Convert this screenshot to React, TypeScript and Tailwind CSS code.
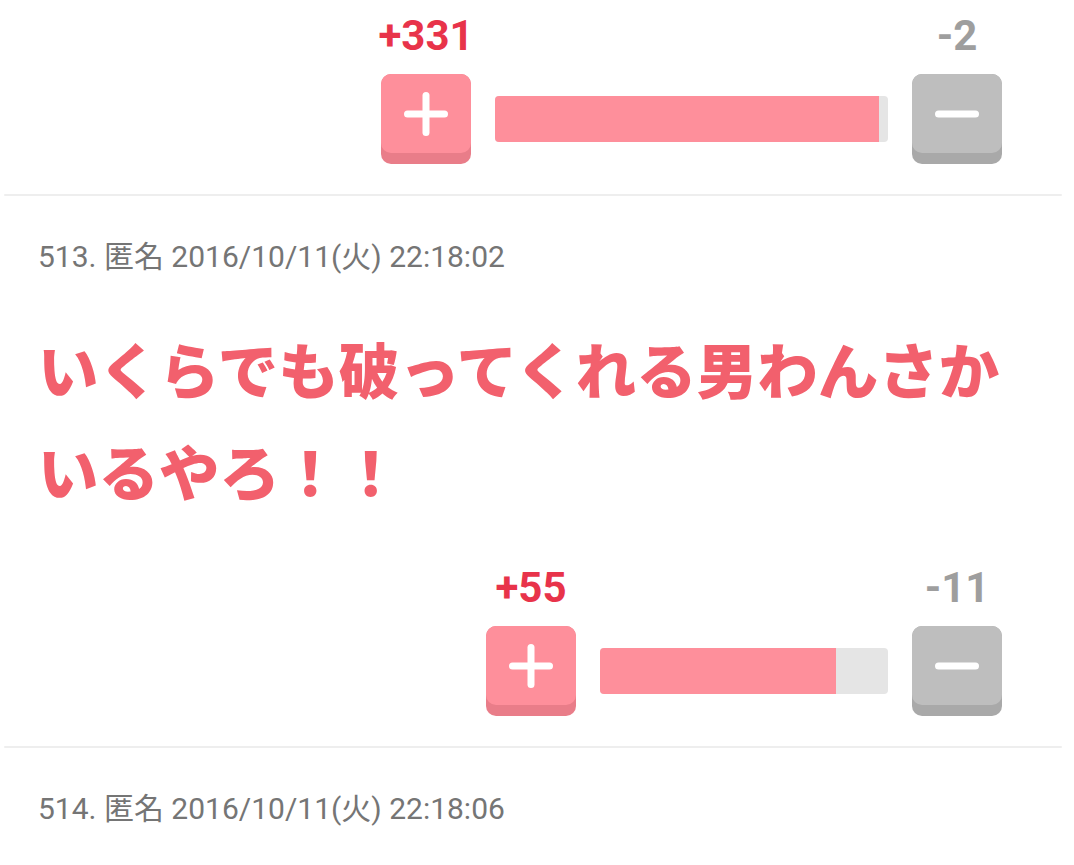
import React from "react";

const FONT = { fontFamily: '"Roboto", "Noto Sans CJK JP", sans-serif' };

function PlusIcon() {
  return (
    <svg width="44" height="44" viewBox="0 0 44 44">
      <line x1="22" y1="3.5" x2="22" y2="40.5" stroke="#fff" strokeWidth="7" strokeLinecap="round" />
      <line x1="3.5" y1="22" x2="40.5" y2="22" stroke="#fff" strokeWidth="7" strokeLinecap="round" />
    </svg>
  );
}

function MinusIcon() {
  return (
    <svg width="44" height="10" viewBox="0 0 44 10">
      <line x1="3.5" y1="5" x2="40.5" y2="5" stroke="#fff" strokeWidth="7" strokeLinecap="round" />
    </svg>
  );
}

function Vote({
  plus,
  minus,
  barWidth,
  fillWidth,
}: {
  plus: string;
  minus: string;
  barWidth: number;
  fillWidth: number;
}) {
  return (
    <div className="flex justify-end pr-[72px] pt-[12px]" style={FONT}>
      <div className="flex items-start">
        <div className="flex w-[90px] flex-col items-center">
          <div className="h-[48px] whitespace-nowrap text-[42px] font-bold leading-[48px] text-[#e8334a]">
            {plus}
          </div>
          <div className="mt-[14px] h-[90px] w-[90px] rounded-[10px] bg-[#e97d89]">
            <div className="flex h-[79px] w-[90px] items-center justify-center rounded-[10px] bg-[#fe8f9b]">
              <PlusIcon />
            </div>
          </div>
        </div>
        <div
          className="mx-[24px] mt-[84px] flex h-[46px] overflow-hidden rounded-[4px] bg-[#e5e5e5]"
          style={{ width: barWidth }}
        >
          <div className="h-full bg-[#fe8f9b]" style={{ width: fillWidth }} />
        </div>
        <div className="flex w-[90px] flex-col items-center">
          <div className="h-[48px] whitespace-nowrap text-[42px] font-bold leading-[48px] text-[#9e9e9e]">
            {minus}
          </div>
          <div className="mt-[14px] h-[90px] w-[90px] rounded-[10px] bg-[#a9a9a9]">
            <div className="flex h-[79px] w-[90px] items-center justify-center rounded-[10px] bg-[#bebebe]">
              <MinusIcon />
            </div>
          </div>
        </div>
      </div>
    </div>
  );
}

function Separator() {
  return <div className="ml-[4px] mr-[12px] mt-[30px] h-[2px] rounded-full bg-[#eeeeee]" />;
}

function Meta({ text }: { text: string }) {
  return (
    <div
      className="mt-[41px] h-[40px] whitespace-nowrap pl-[38px] text-[30px] leading-[40px] text-[#757575]"
      style={FONT}
    >
      {text}
    </div>
  );
}

export default function App() {
  return (
    <div className="h-[865px] w-[1074px] overflow-hidden bg-white">
      <Vote plus="+331" minus="-2" barWidth={393} fillWidth={384} />
      <Separator />
      <Meta text="513. 匿名 2016/10/11(火) 22:18:02" />
      <div
        className="mt-[40px] whitespace-nowrap pl-[38px] text-[60.5px] font-black leading-[102px] text-[#f2606d]"
        style={{ fontFamily: '"Noto Sans CJK JP", sans-serif' }}
      >
        いくらでも破ってくれる男わんさか
        <br />
        いるやろ！！
      </div>
      <div className="mt-[31px]">
        <Vote plus="+55" minus="-11" barWidth={288} fillWidth={236} />
      </div>
      <Separator />
      <Meta text="514. 匿名 2016/10/11(火) 22:18:06" />
    </div>
  );
}
